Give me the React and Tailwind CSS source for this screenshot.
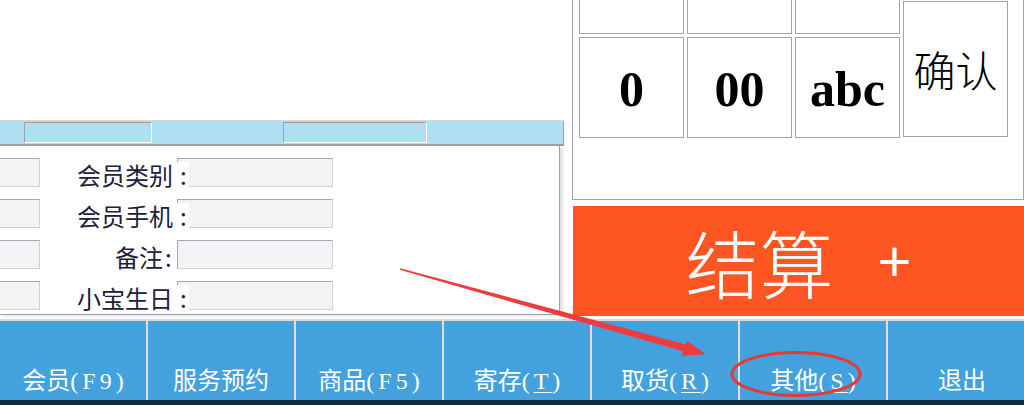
import React from "react";

const rows = [
  { label: "会员类别", long: true },
  { label: "会员手机", long: true },
  { label: "备注", long: false },
  { label: "小宝生日", long: true },
];

function FormRow({ label, long }) {
  return (
    <div className="flex items-center h-[29px]">
      <div className="w-[40px] h-[29px] shrink-0 bg-[#f3f3f6] border border-l-0 border-t-[#a6a6b4] border-r-[#cfcfd8] border-b-[#cfcfd8]" />
      <div className="w-[137px] shrink-0 flex justify-end items-center text-[24px] leading-none text-[#20203a] pt-[4px]">
        {long ? (
          <>
            <span className="mr-[4px]">{label}</span>
            <span className="relative z-10 -mr-[12px] w-[12px] h-[25px] flex items-center bg-white pl-[3px]">:</span>
          </>
        ) : (
          <>
            <span className="mr-[2px]">{label}</span>
            <span className="mr-[5px] w-[7px]">:</span>
          </>
        )}
      </div>
      <div className="w-[156px] h-[29px] shrink-0 bg-[#f3f3f6] border border-t-[#a6a6b4] border-l-[#a6a6b4] border-r-[#cfcfd8] border-b-[#cfcfd8]" />
    </div>
  );
}

function Key({ children, className = "" }) {
  return (
    <div
      className={
        "w-[105px] shrink-0 bg-white border border-[#a3a3a3] flex items-center justify-center text-black " +
        className
      }
    >
      {children}
    </div>
  );
}

function BarButton({ children, last }) {
  return (
    <div
      className={
        "w-[148px] shrink-0 h-full flex items-end justify-center pb-[7px] text-white text-[24px] leading-none " +
        (last ? "" : "border-r-2 border-[#dedede]")
      }
    >
      <span className="whitespace-nowrap">{children}</span>
    </div>
  );
}

function Key2({ children }) {
  return <span className="tracking-[4px] -mr-[4px]">{children}</span>;
}

function U({ children }) {
  return <span className="underline underline-offset-[3px] decoration-1">{children}</span>;
}

export default function App() {
  return (
    <div className="relative w-[1024px] h-[405px] overflow-hidden bg-white font-['Noto_Sans_CJK_SC',sans-serif]">
      {/* top region */}
      <div className="flex h-[319px]">
        {/* left column */}
        <div className="w-[564px] shrink-0 flex flex-col">
          <div className="h-[121px] border-b border-[#d8d8d8]" />
          <div className="h-[25px] bg-[#aee0f2] border-b-2 border-r border-[#a0a0aa] flex items-start">
            <div className="ml-[24px] mt-[1px] w-[128px] h-[21px] border border-t-[#a0a0a0] border-l-[#a0a0a0] border-b-white border-r-white" />
            <div className="ml-[131px] mt-[1px] w-[144px] h-[21px] border border-t-[#a0a0a0] border-l-[#a0a0a0] border-b-white border-r-white" />
          </div>
          <div className="w-[560px] h-[169px] bg-white border-r border-b border-[#a0a0aa] shadow-[3px_1px_3px_rgba(0,0,0,0.12)] pt-[12px] flex flex-col gap-[12px]">
            {rows.map((r) => (
              <FormRow key={r.label} label={r.label} long={r.long} />
            ))}
          </div>
        </div>

        {/* right column */}
        <div className="ml-[8px] flex-1 flex flex-col">
          <div className="h-[200px] border-l border-r border-b border-[#a3a3a3] pl-[6px] flex gap-[3px]">
            {["0", "00", "abc"].map((t) => (
              <div key={t} className="flex flex-col gap-[3px]">
                <Key className="h-[34px] border-t-0" />
                <Key className="h-[101px] font-['Liberation_Serif',serif] font-bold text-[50px] leading-none">
                  <span className="pt-[2px]">{t}</span>
                </Key>
              </div>
            ))}
            <Key className="mt-[1px] h-[136px] text-[42px] leading-none">
              <span className="font-light">确认</span>
            </Key>
          </div>
          <div className="mt-[6px] ml-[1px] h-[110px] bg-[#fe5623] flex items-center justify-center text-white">
            <span className="text-[74px] leading-none font-light">结算</span>
            <span className="ml-[44px] text-[58px] leading-none font-['Liberation_Sans',sans-serif] font-light">+</span>
          </div>
        </div>
      </div>

      {/* bottom button bar */}
      <div className="h-[81px] border-t-2 border-[#d9d9d9] bg-[#43a1dd] flex font-['Liberation_Serif','Noto_Sans_CJK_SC',serif]">
        <BarButton>
          会员<Key2>(F9)</Key2>
        </BarButton>
        <BarButton>服务预约</BarButton>
        <BarButton>
          商品<Key2>(F5)</Key2>
        </BarButton>
        <BarButton>
          寄存<Key2>(<U>T</U>)</Key2>
        </BarButton>
        <BarButton>
          取货<Key2>(<U>R</U>)</Key2>
        </BarButton>
        <BarButton>
          其他<Key2>(<U>S</U>)</Key2>
        </BarButton>
        <BarButton last>退出</BarButton>
      </div>
      <div className="h-[5px] bg-[#0f2b40]" />

      {/* annotation overlay */}
      <svg
        className="absolute left-0 top-0 pointer-events-none"
        width="1024"
        height="405"
        viewBox="0 0 1024 405"
      >
        <polygon
          points="400.2,268.3 686,344.6 684,351.6 399.8,269.7"
          fill="#ef3b3b"
        />
        <polygon points="706,354 681.5,356 687,341" fill="#ef3b3b" />
        <ellipse
          cx="796"
          cy="374"
          rx="64"
          ry="21.5"
          fill="none"
          stroke="#e53935"
          strokeWidth="3"
        />
      </svg>
    </div>
  );
}
